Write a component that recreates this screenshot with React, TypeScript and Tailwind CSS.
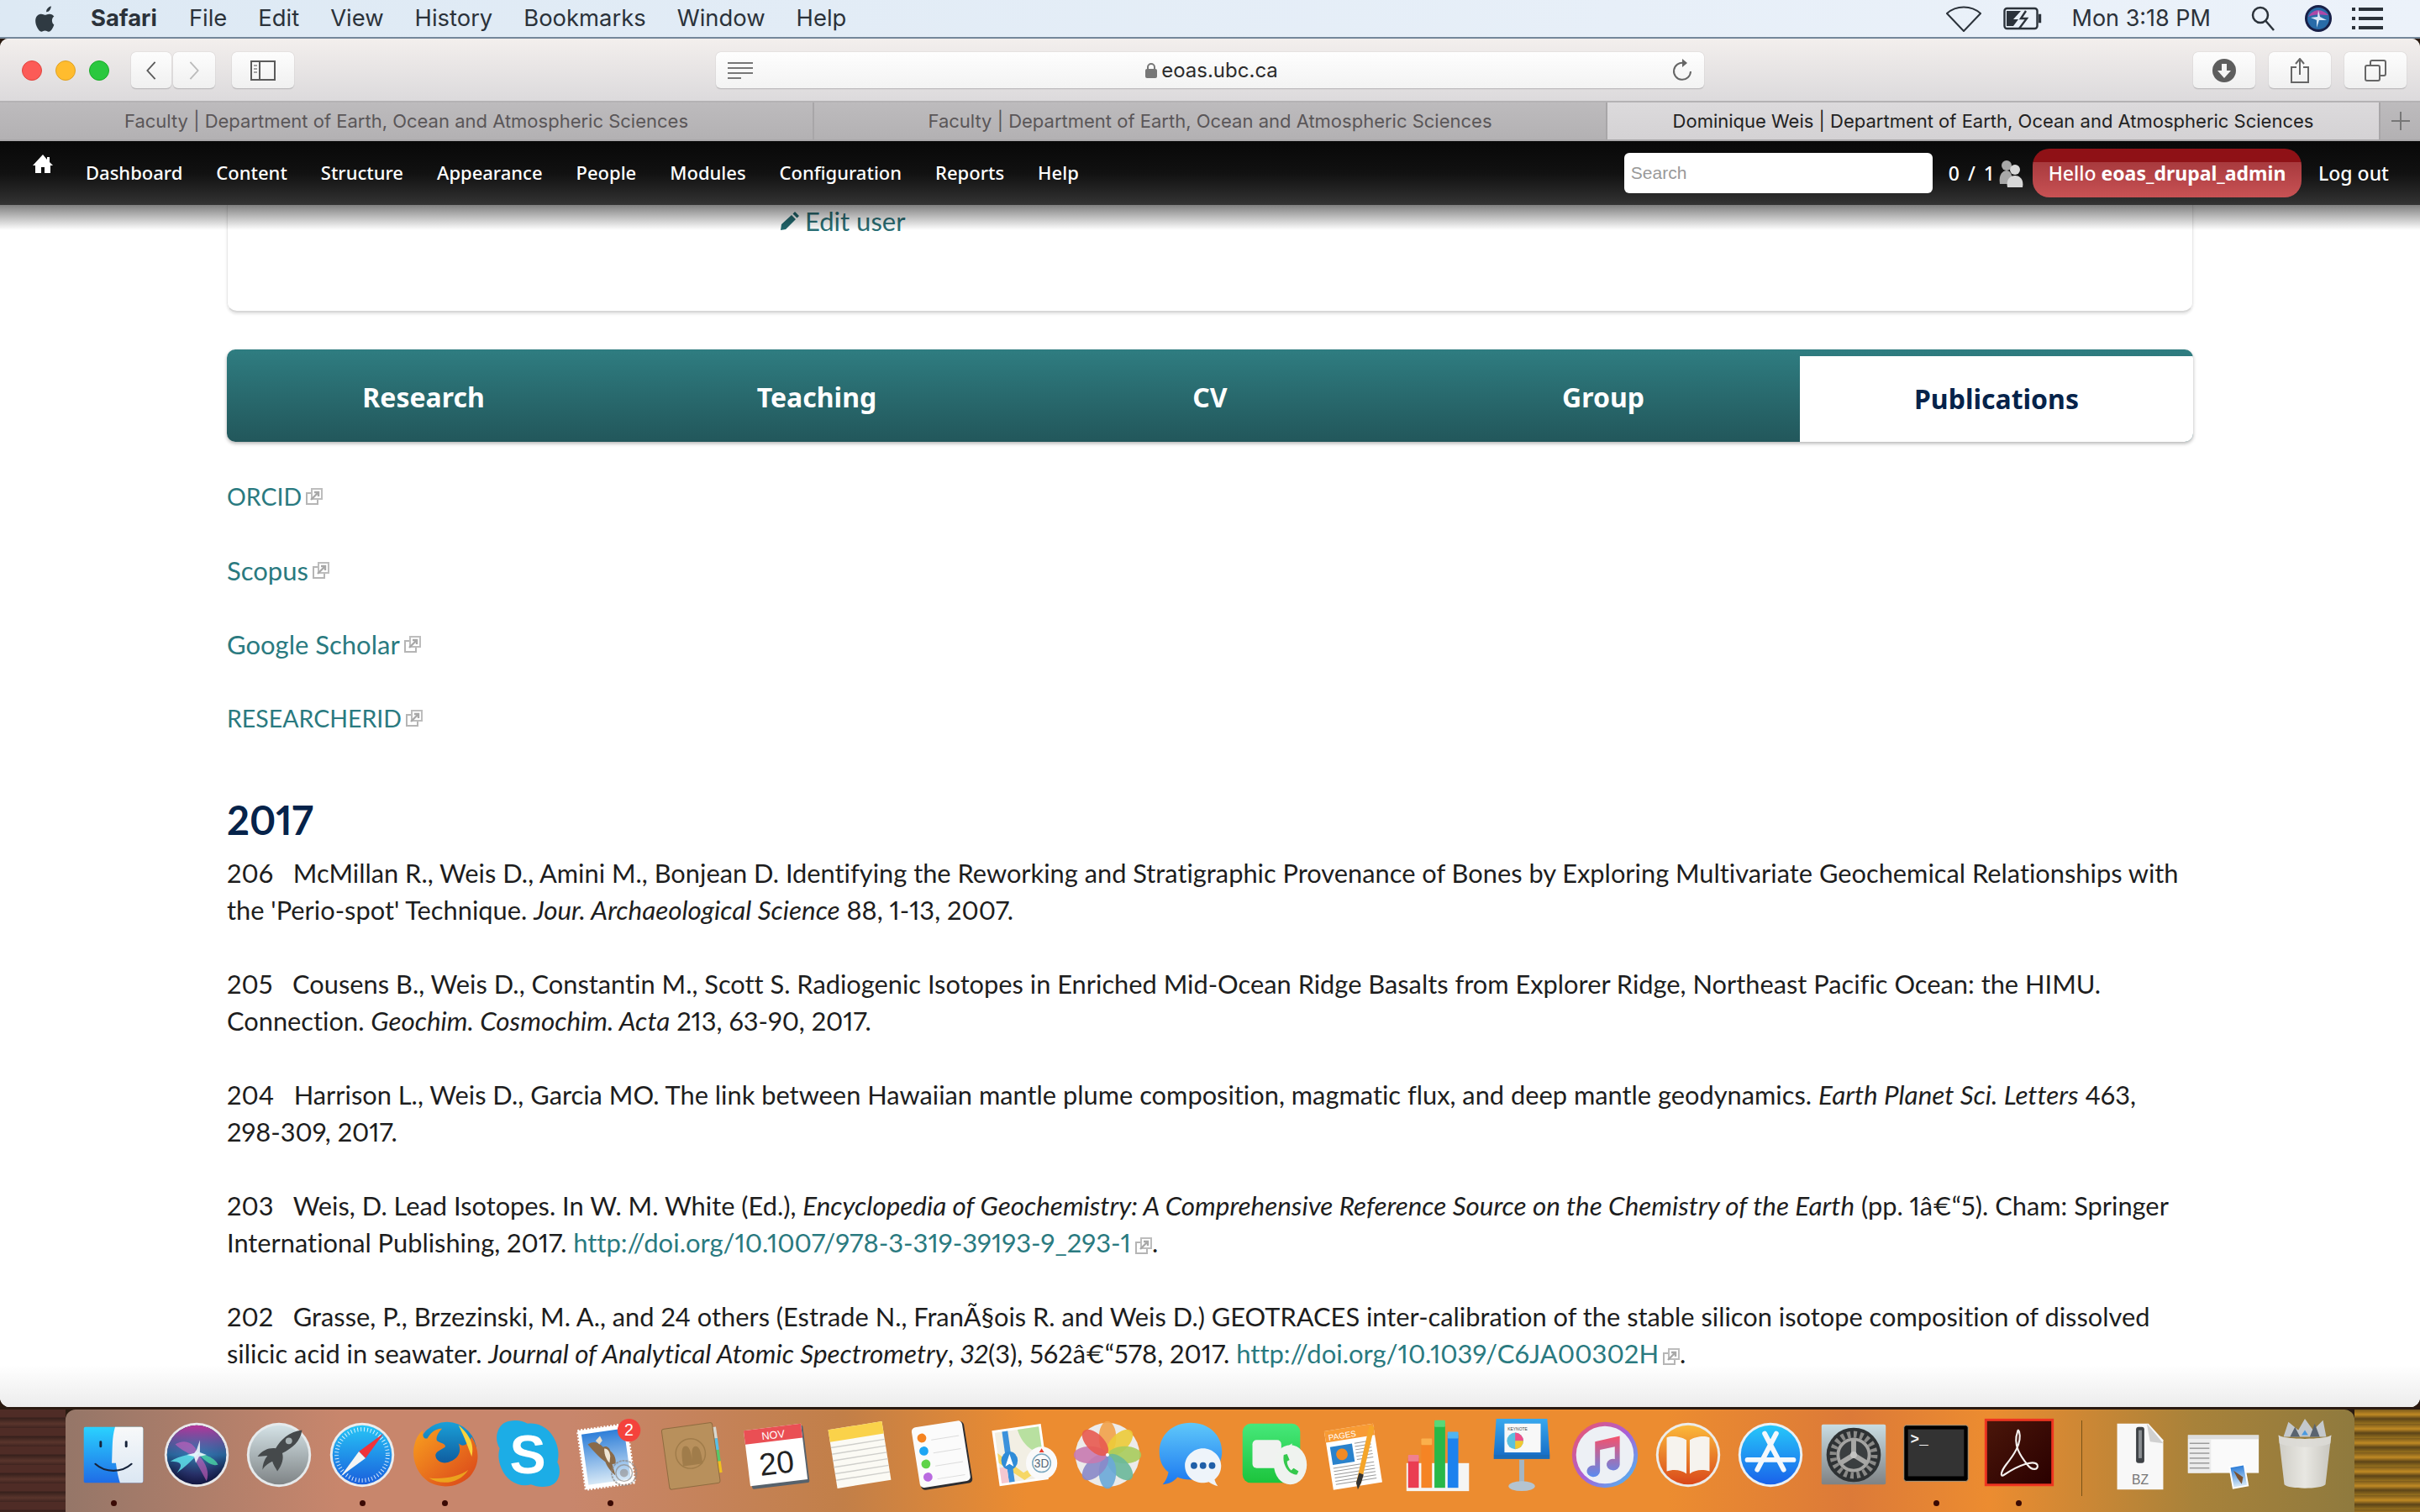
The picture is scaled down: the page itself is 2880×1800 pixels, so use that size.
import React from "react";

const ExtIcon = () => (
  <svg viewBox="0 0 20 20" className="inline-block w-[20px] h-[20px] ml-[5px] align-[-2px]" fill="none">
    <rect x="1" y="6" width="13" height="13" fill="#fff" stroke="#b5b5b5" strokeWidth="2" />
    <rect x="7" y="1" width="12" height="12" fill="#fff" stroke="#bdbdbd" strokeWidth="2" />
    <path d="M6 14 L14 6 M10 5 H15 V10" stroke="#a8a8a8" strokeWidth="2.4" />
  </svg>
);

const Ic = ({ children }: { children: React.ReactNode }) => (
  <svg viewBox="0 0 100 100" className="w-[98px] h-[98px] overflow-visible">{children}</svg>
);

const Defs = () => (
  <svg width="0" height="0" className="absolute">
    <defs>
      <linearGradient id="fL" x1="0" y1="0" x2="0" y2="1"><stop offset="0" stopColor="#2ad2ff" /><stop offset="1" stopColor="#1f6ce6" /></linearGradient>
      <linearGradient id="fR" x1="0" y1="0" x2="0" y2="1"><stop offset="0" stopColor="#f8f9fa" /><stop offset="1" stopColor="#dbe7f3" /></linearGradient>
      <radialGradient id="siri" cx="0.5" cy="0.5" r="0.55"><stop offset="0" stopColor="#3f6a9c" /><stop offset="0.6" stopColor="#2c2c68" /><stop offset="1" stopColor="#0b1236" /></radialGradient>
      <linearGradient id="siriT" x1="0" y1="0" x2="0" y2="1"><stop offset="0" stopColor="#b8349a" /><stop offset="0.5" stopColor="#2c82b8" stopOpacity="0.7" /><stop offset="1" stopColor="#0b1236" stopOpacity="0" /></linearGradient>
      <linearGradient id="lp" x1="0" y1="0" x2="0" y2="1"><stop offset="0" stopColor="#d4e2e6" /><stop offset="1" stopColor="#7f8486" /></linearGradient>
      <linearGradient id="saf" x1="0" y1="0" x2="0" y2="1"><stop offset="0" stopColor="#27c5f6" /><stop offset="1" stopColor="#1a5fdc" /></linearGradient>
      <linearGradient id="ffG" x1="0" y1="0" x2="0" y2="1"><stop offset="0" stopColor="#1aa0d8" /><stop offset="1" stopColor="#0b3f86" /></linearGradient>
      <linearGradient id="ffO" x1="0" y1="0" x2="1" y2="1"><stop offset="0" stopColor="#f9a01f" /><stop offset="1" stopColor="#d9421a" /></linearGradient>
      <linearGradient id="sky" x1="0" y1="0" x2="0" y2="1"><stop offset="0" stopColor="#2e7ed8" /><stop offset="1" stopColor="#d6e8f6" /></linearGradient>
      <linearGradient id="itu" x1="0" y1="0" x2="1" y2="1"><stop offset="0" stopColor="#f7545a" /><stop offset="0.5" stopColor="#a860d8" /><stop offset="1" stopColor="#3ec6f6" /></linearGradient>
      <linearGradient id="itn" x1="0" y1="0" x2="0" y2="1"><stop offset="0" stopColor="#f7506a" /><stop offset="1" stopColor="#5a8cf0" /></linearGradient>
      <linearGradient id="ibk" x1="0" y1="0" x2="0" y2="1"><stop offset="0" stopColor="#fbb93a" /><stop offset="1" stopColor="#d9481a" /></linearGradient>
      <linearGradient id="app" x1="0" y1="0" x2="0" y2="1"><stop offset="0" stopColor="#26c8fa" /><stop offset="1" stopColor="#1a62ea" /></linearGradient>
      <linearGradient id="msg" x1="0" y1="0" x2="0" y2="1"><stop offset="0" stopColor="#5fc8fa" /><stop offset="1" stopColor="#1c78f0" /></linearGradient>
      <linearGradient id="ft" x1="0" y1="0" x2="0" y2="1"><stop offset="0" stopColor="#46e87a" /><stop offset="1" stopColor="#1cc43c" /></linearGradient>
      <linearGradient id="sys" x1="0" y1="0" x2="0" y2="1"><stop offset="0" stopColor="#c9dde3" /><stop offset="1" stopColor="#7f8284" /></linearGradient>
      <linearGradient id="acro" x1="0" y1="0" x2="1" y2="1"><stop offset="0" stopColor="#4a160a" /><stop offset="1" stopColor="#2a0000" /></linearGradient>
      <linearGradient id="key" x1="0" y1="0" x2="0" y2="1"><stop offset="0" stopColor="#38a8ee" /><stop offset="1" stopColor="#1870c8" /></linearGradient>
      <linearGradient id="trash" x1="0" y1="0" x2="1" y2="0"><stop offset="0" stopColor="#cfcdc6" /><stop offset="0.5" stopColor="#e8e7e2" /><stop offset="1" stopColor="#c8c6bf" /></linearGradient>
    </defs>
  </svg>
);

const icons: React.ReactNode[] = [
  <Ic key="finder">
    <rect x="14" y="16" width="72" height="68" rx="2" fill="url(#fL)" />
    <path d="M52 16 H84 a2 2 0 0 1 2 2 V82 a2 2 0 0 1 -2 2 H58 C55 74 54 68 53 60 H48 C49 40 48 30 52 16 Z" fill="url(#fR)" />
    <rect x="33" y="33" width="3" height="8" rx="1.5" fill="#16233a" />
    <rect x="64" y="33" width="3" height="8" rx="1.5" fill="#16233a" />
    <path d="M28 61 C40 72 60 72 72 61" stroke="#16233a" strokeWidth="2.2" fill="none" strokeLinecap="round" />
  </Ic>,
  <Ic key="siri">
    <circle cx="50" cy="50" r="39" fill="#e8e8ea" />
    <circle cx="50" cy="50" r="36" fill="url(#siri)" />
    <circle cx="50" cy="50" r="36" fill="url(#siriT)" />
    <path d="M24 37 C40 28 50 40 52 50 C62 60 66 72 62 82 C56 70 50 60 46 52 C38 46 30 44 24 37 Z" fill="#d060c0" opacity="0.6" />
    <path d="M18 58 C30 50 44 50 54 46 C46 56 34 66 26 72 C34 62 32 58 18 58 Z" fill="#62e8f0" opacity="0.8" />
    <path d="M52 48 C64 50 74 56 76 62 C68 64 60 58 52 48 Z" fill="#4ee0a8" opacity="0.75" />
    <path d="M50 44 L54 32 L54 47 L62 50 L53 52 L49 60 L47 52 L38 50 L47 48 Z" fill="#f6fbff" opacity="0.85" />
  </Ic>,
  <Ic key="launch">
    <circle cx="50" cy="50" r="39" fill="#e6eaec" />
    <circle cx="50" cy="50" r="36" fill="url(#lp)" />
    <path d="M78 20 C62 22 52 32 46 42 C38 41 30 44 24 52 L36 51 C32 56 30 62 30 68 C34 62 38 60 42 58 C43 62 46 66 48 70 C54 62 56 54 54 48 C66 42 76 34 78 20 Z" fill="#45494b" />
    <circle cx="62" cy="33" r="4" fill="#a8b2b4" />
  </Ic>,
  <Ic key="safari">
    <circle cx="50" cy="50" r="39" fill="#ececec" />
    <circle cx="50" cy="50" r="36" fill="url(#saf)" />
    <circle cx="50" cy="50" r="31" fill="none" stroke="#fff" strokeWidth="5" strokeDasharray="1 3" opacity="0.85" />
    <polygon points="76,24 54,54 46,46" fill="#f0333a" />
    <polygon points="24,76 46,46 54,54" fill="#f4f4f4" />
  </Ic>,
  <Ic key="firefox">
    <circle cx="52" cy="46" r="36" fill="url(#ffG)" />
    <path d="M82 28 C92 44 92 62 80 76 C68 88 48 92 32 84 C14 74 8 52 13 36 C15 28 20 22 23 20 C22 28 24 31 28 30 C34 20 40 18 46 18 C40 24 38 30 40 33 C44 36 50 36 50 40 C46 44 40 44 38 50 C38 58 48 62 56 58 C66 54 70 46 66 36 C72 42 78 36 82 28 Z" fill="url(#ffO)" />
    <path d="M66 14 C78 24 86 36 82 52 C78 42 74 30 66 14 Z" fill="#fbd33a" />
    <path d="M30 78 C46 88 68 84 78 68 C68 76 48 80 30 78 Z" fill="#f0c020" opacity="0.7" />
  </Ic>,
  <Ic key="skype">
    <path d="M28 9 C37 7 44 9 50 12 C65 10 78 19 84 34 C88 44 88 52 86 59 C92 70 88 86 75 88 C66 90 60 88 54 86 C39 90 24 81 18 66 C14 56 14 48 16 42 C8 29 14 11 28 9 Z" fill="#1cade6" />
    <text x="50" y="72" textAnchor="middle" fontSize="66" fontWeight="700" fill="#fff" fontFamily="'Liberation Sans',sans-serif">S</text>
  </Ic>,
  <Ic key="mail">
    <g transform="rotate(-8 46 50)">
      <rect x="14" y="16" width="60" height="72" fill="#fff" stroke="#fff" strokeWidth="3" strokeDasharray="2 2" />
      <rect x="18" y="21" width="52" height="62" fill="url(#sky)" />
      <path d="M24 34 C32 30 38 34 42 40 C46 38 50 42 50 46 C54 50 56 56 54 62 L50 62 L52 76 C48 72 44 66 42 58 C36 52 30 44 24 34 Z" fill="#8a6a48" />
      <path d="M43 42 C47 42 49 46 49 52 L47 60 C44 56 42 50 43 42 Z" fill="#efe6d6" />
      <path d="M34 31 L40 26 L42 32 L38 36 Z" fill="#e8dcc8" />
    </g>
    <circle cx="66" cy="72" r="15" fill="none" stroke="#8f8a88" strokeWidth="2" opacity="0.7" strokeDasharray="3 1" />
    <circle cx="66" cy="72" r="10" fill="none" stroke="#8f8a88" strokeWidth="1.5" opacity="0.7" />
    <circle cx="66" cy="72" r="5" fill="#8f8a88" opacity="0.6" />
    <circle cx="72" cy="20" r="14" fill="#f4423c" />
    <text x="72" y="27" textAnchor="middle" fontSize="20" fill="#fff" fontFamily="'Liberation Sans',sans-serif">2</text>
  </Ic>,
  <Ic key="contacts">
    <g transform="rotate(-8 50 50)">
      <rect x="76" y="20" width="6" height="14" fill="#d8d8d0" />
      <rect x="76" y="34" width="6" height="14" fill="#58c0e8" />
      <rect x="76" y="48" width="6" height="14" fill="#58c868" />
      <rect x="76" y="62" width="6" height="14" fill="#f0c020" />
      <rect x="16" y="14" width="62" height="74" rx="3" fill="#b8905c" stroke="#8f6c40" strokeWidth="1" />
      <circle cx="47" cy="48" r="18" fill="none" stroke="#a07c4a" strokeWidth="1.5" />
      <path d="M36 62 C36 50 36 38 42 38 C48 38 48 50 48 62 Z M48 62 C48 52 48 40 54 40 C60 40 60 52 60 62 Z" fill="#a07c4a" />
    </g>
  </Ic>,
  <Ic key="cal">
    <g transform="rotate(-7 50 50)">
      <rect x="16" y="18" width="70" height="70" rx="2" fill="#57626c" />
      <rect x="14" y="16" width="70" height="68" fill="#fff" />
      <rect x="14" y="16" width="70" height="17" fill="#ea4f54" />
      <text x="49" y="30" textAnchor="middle" fontSize="13" fill="#fff" fontFamily="'Liberation Sans',sans-serif">NOV</text>
      <text x="49" y="73" textAnchor="middle" fontSize="38" fill="#222" fontFamily="'Liberation Sans',sans-serif">20</text>
    </g>
  </Ic>,
  <Ic key="notes">
    <g transform="rotate(-9 50 50)">
      <rect x="17" y="14" width="66" height="72" fill="#fbfaf4" />
      <rect x="17" y="14" width="66" height="15" fill="#fad24a" />
      {[36, 44, 52, 60, 68, 76].map((y) => <line key={y} x1="17" x2="83" y1={y} y2={y} stroke="#cfcfcb" strokeWidth="1.5" />)}
    </g>
  </Ic>,
  <Ic key="rem">
    <g transform="rotate(-9 50 50)">
      <rect x="19" y="13" width="63" height="76" rx="5" fill="#2d2d30" />
      <rect x="18" y="12" width="62" height="74" rx="5" fill="#fbfbfb" />
      {[["#f58320", 26], ["#1ea6f4", 42], ["#5fd34a", 58], ["#b96ae0", 74]].map(([c, y]) => (
        <g key={String(c)}>
          <circle cx="29" cy={Number(y)} r="5.5" fill={String(c)} />
          <line x1="40" x2="74" y1={Number(y) + 4} y2={Number(y) + 4} stroke="#dcdcdc" strokeWidth="1" />
        </g>
      ))}
    </g>
  </Ic>,
  <Ic key="maps">
    <g transform="rotate(-8 45 50)">
      <rect x="14" y="16" width="60" height="68" fill="#fff" />
      <rect x="17" y="19" width="54" height="62" fill="#f2efe4" />
      <path d="M45 19 H71 V50 C60 50 48 38 45 19 Z" fill="#b8e0a0" />
      <path d="M17 44 L45 72 L71 60 L71 68 L45 81 L17 56 Z" fill="#f6d765" />
      <rect x="26" y="19" width="7" height="62" fill="#3c92dc" />
      <rect x="17" y="62" width="9" height="19" fill="#f6c8d0" />
    </g>
    <ellipse cx="31" cy="57" rx="10" ry="11" fill="#2f8cd8" />
    <polygon points="31,49 36,64 31,61 26,64" fill="#fff" />
    <ellipse cx="70" cy="60" rx="19" ry="20" fill="#fafafa" />
    <circle cx="70" cy="60" r="11" fill="none" stroke="#7aa8c0" strokeWidth="1.5" />
    <polygon points="70,42 73,47 67,47" fill="#e84030" />
    <text x="70" y="65" textAnchor="middle" fontSize="14" fill="#567" fontFamily="'Liberation Sans',sans-serif">3D</text>
  </Ic>,
  <Ic key="photos">
    <circle cx="50" cy="50" r="39" fill="#ecebea" />
    {[["#f2a24a", 0], ["#eccb38", 45], ["#a8cc5c", 90], ["#6ab89a", 135], ["#6aa8d8", 180], ["#8a88c8", 225], ["#c87ab0", 270], ["#e85a50", 315]].map(([c, r]) => (
      <ellipse key={String(r)} cx="50" cy="29" rx="10.5" ry="20" fill={String(c)} opacity="0.9" transform={`rotate(${r} 50 50)`} />
    ))}
    <circle cx="50" cy="50" r="2" fill="#fff" />
  </Ic>,
  <Ic key="msgs">
    <path d="M50 11 C72 11 88 26 88 46 C88 66 72 80 50 80 C44 80 38 79 34 77 C30 82 24 85 16 86 C20 81 22 77 23 71 C15 65 12 56 12 46 C12 26 28 11 50 11 Z" fill="url(#msg)" />
    <path d="M65 42 C77 42 87 52 87 63 C87 70 84 76 79 80 C80 83 81 85 83 88 C78 87 75 85 72 83 C69 84 67 84 65 84 C53 84 43 75 43 63 C43 52 53 42 65 42 Z" fill="#eef4fa" />
    <circle cx="54" cy="63" r="4" fill="#1f5fa8" /><circle cx="65" cy="63" r="4" fill="#1f5fa8" /><circle cx="76" cy="63" r="4" fill="#1f5fa8" />
  </Ic>,
  <Ic key="ft">
    <rect x="12" y="12" width="70" height="72" rx="10" fill="url(#ft)" />
    <rect x="24" y="32" width="35" height="34" rx="5" fill="#f0f2f0" />
    <polygon points="59,46 72,36 72,62 59,52" fill="#eef2ee" />
    <ellipse cx="70" cy="62" rx="20" ry="24" fill="#eff3ef" />
    <path d="M62 50 C60 62 68 74 78 74 L80 70 L74 66 L71 69 C68 66 66 62 66 58 L69 56 L66 49 Z" fill="#34c84c" />
  </Ic>,
  <Ic key="pages">
    <g transform="rotate(-9 48 50)">
      <rect x="16" y="16" width="60" height="72" fill="#fff" />
      <rect x="16" y="16" width="60" height="14" fill="#f89b34" />
      <text x="20" y="28" fontSize="10" fill="#fff" fontFamily="'Liberation Sans',sans-serif">PAGES</text>
      <rect x="20" y="36" width="27" height="22" fill="#2a82cc" />
      <circle cx="33" cy="47" r="7" fill="#f08a24" />
      {[62, 66, 70, 74, 78, 82].map((y) => <line key={y} x1="20" x2="70" y1={y} y2={y} stroke="#999" strokeWidth="1" />)}
      {[36, 40, 44, 48, 52, 56].map((y) => <line key={y} x1="50" x2="70" y1={y} y2={y} stroke="#999" strokeWidth="1" />)}
    </g>
    <path d="M66 14 L72 16 L56 84 L52 92 L50 84 Z" fill="#f5a52a" />
    <path d="M53.5 72 L59 74 L56 84 L52 92 L50 84 Z" fill="#333" />
  </Ic>,
  <Ic key="num">
    <rect x="10" y="60" width="76" height="34" fill="#f5f5f3" />
    <rect x="12" y="54" width="13" height="36" fill="#ea3d52" />
    <rect x="12" y="50" width="13" height="8" rx="1" fill="#f08090" />
    <rect x="28" y="34" width="13" height="56" fill="#f58424" />
    <rect x="28" y="30" width="13" height="8" rx="1" fill="#fbb04c" />
    <rect x="44" y="12" width="13" height="78" fill="#28b848" />
    <rect x="44" y="8" width="13" height="8" rx="1" fill="#58d878" />
    <rect x="60" y="26" width="13" height="64" fill="#1c82ee" />
    <rect x="60" y="22" width="13" height="8" rx="1" fill="#50b4f0" />
  </Ic>,
  <Ic key="key">
    <rect x="47" y="56" width="6" height="32" fill="#a4b6c4" />
    <ellipse cx="50" cy="88" rx="16" ry="6" fill="#b4c4d0" />
    <polygon points="19,6 81,6 84,50 16,50" fill="url(#key)" />
    <rect x="16" y="50" width="68" height="5" fill="#1a6cb8" />
    <rect x="29" y="12" width="44" height="35" fill="#f8f8f8" />
    <text x="33" y="20" fontSize="5" fill="#444" fontFamily="'Liberation Sans',sans-serif">KEYNOTE</text>
    <circle cx="42" cy="33" r="10" fill="#5ac0e0" />
    <path d="M42 33 V23 A10 10 0 0 1 52 33 Z" fill="#f05088" />
    <path d="M42 33 H52 A10 10 0 0 1 42 43 Z" fill="#f2c830" />
  </Ic>,
  <Ic key="itunes">
    <circle cx="50" cy="50" r="40" fill="url(#itu)" />
    <circle cx="50" cy="50" r="35" fill="#edf0f5" />
    <path d="M38 34 L68 27 V62 A8 7 0 1 1 62 55 V40 L44 44 V70 A8 7 0 1 1 38 63 Z" fill="url(#itn)" />
  </Ic>,
  <Ic key="ibooks">
    <circle cx="50" cy="50" r="39" fill="#ececea" />
    <circle cx="50" cy="50" r="36" fill="url(#ibk)" />
    <path d="M48 32 C42 28 30 26 24 29 V70 C32 67 42 68 48 73 Z M52 32 C58 28 70 26 76 29 V70 C68 67 58 68 52 73 Z" fill="#f6f3ee" />
  </Ic>,
  <Ic key="appstore">
    <circle cx="50" cy="50" r="39" fill="#eaf0f4" />
    <circle cx="50" cy="50" r="36" fill="url(#app)" />
    <path d="M57 24 L34 68 M43 24 L66 68" stroke="#f4f8fc" strokeWidth="6" strokeLinecap="round" />
    <path d="M22 56 H78" stroke="#f4f8fc" strokeWidth="6" strokeLinecap="round" />
  </Ic>,
  <Ic key="sys">
    <rect x="11" y="13" width="78" height="73" rx="2" fill="url(#sys)" />
    <circle cx="50" cy="50" r="33" fill="#2e3234" />
    <circle cx="50" cy="50" r="25" fill="none" stroke="#8a8a88" strokeWidth="8" strokeDasharray="4 3.8" />
    <circle cx="50" cy="50" r="19" fill="#3a3e40" stroke="#a4a4a2" strokeWidth="4" />
    <path d="M50 50 V32 M50 50 L66 60 M50 50 L34 60" stroke="#a8a8a6" strokeWidth="6" />
    <circle cx="50" cy="50" r="4" fill="#c4c4c2" />
  </Ic>,
  <Ic key="term">
    <rect x="11" y="14" width="78" height="68" rx="3" fill="#000" stroke="#a89a80" strokeWidth="1" />
    <rect x="16" y="19" width="68" height="57" fill="#333" />
    <text x="19" y="37" fontSize="18" fontWeight="700" fill="#f2f2f2" fontFamily="'Liberation Mono',monospace">&gt;_</text>
  </Ic>,
  <Ic key="acrobat">
    <rect x="8" y="6" width="84" height="82" fill="#ee3420" />
    <rect x="11" y="9" width="78" height="76" fill="url(#acro)" />
    <path d="M48 22 C42 38 52 52 60 62 C66 70 74 68 72 62 C68 56 50 62 32 74 C26 78 28 70 34 62 C42 52 54 36 50 22 C49 19 48 20 48 22 Z" fill="none" stroke="#f4f0ee" strokeWidth="2.2" />
  </Ic>,
];

const stacks: React.ReactNode[] = [
  <Ic key="zip">
    <path d="M22 12 H60 L78 32 V92 H22 Z" fill="#f8f8f8" />
    <path d="M58 12 L78 36 L62 34 Z" fill="#d0d0d0" />
    <rect x="45" y="16" width="10" height="44" rx="3" fill="#3e4246" />
    <rect x="48" y="20" width="4" height="34" fill="#8a8e92" />
    <text x="50" y="86" textAnchor="middle" fontSize="16" fill="#777" fontFamily="'Liberation Sans',sans-serif">BZ</text>
  </Ic>,
  <Ic key="mw">
    <rect x="8" y="26" width="86" height="46" fill="#fafafa" />
    <rect x="8" y="26" width="86" height="5" fill="#ddd" />
    <rect x="8" y="31" width="28" height="41" fill="#ececec" />
    {[36, 42, 48, 54, 60, 66].map((y) => <line key={y} x1="10" x2="34" y1={y} y2={y} stroke="#999" strokeWidth="1.5" />)}
    <g transform="rotate(-10 70 78)">
      <rect x="60" y="62" width="20" height="28" fill="#fff" />
      <rect x="62" y="64" width="16" height="24" fill="url(#sky)" />
      <path d="M65 68 L75 78 L72 86 L68 78 Z" fill="#7a5230" />
    </g>
  </Ic>,
  <Ic key="trash">
    <path d="M18 26 C24 32 76 32 82 26 L75 86 C70 92 30 92 25 86 Z" fill="url(#trash)" />
    <path d="M24 28 L30 10 L42 20 L50 6 L60 20 L72 8 L76 28 Z" fill="#c4c8cc" />
    <path d="M32 28 L38 16 L44 28 Z M56 28 L62 12 L68 28 Z" fill="#5a6470" />
    <path d="M46 26 L50 20 L54 26 Z" fill="#4a9ae0" />
    <path d="M18 26 C24 32 76 32 82 26 L81 36 C70 42 30 42 19 36 Z" fill="#dcdbd6" opacity="0.85" />
  </Ic>,
];

const running = new Set([0, 3, 4, 6, 22, 23]);

const menus = ["File", "Edit", "View", "History", "Bookmarks", "Window", "Help"];
const admin = ["Dashboard", "Content", "Structure", "Appearance", "People", "Modules", "Configuration", "Reports", "Help"];
const tabs = ["Research", "Teaching", "CV", "Group"];

const Btn = ({ w, children }: { w: string; children: React.ReactNode }) => (
  <div className={`${w} h-[44px] rounded-[6px] bg-gradient-to-b from-[#fdfdfd] to-[#f0f0f0] border-b border-b-[#bdbbbd] shadow-[0_0_1px_rgba(0,0,0,0.35)] flex items-center justify-center`}>
    {children}
  </div>
);

const A = ({ children }: { children: React.ReactNode }) => <span className="text-[#2a7a80] text-[31px] leading-none">{children}</span>;
const I = ({ children }: { children: React.ReactNode }) => <i className="text-[31.4px] leading-none">{children}</i>;

export default function App() {
  return (
    <div className="w-[2880px] h-[1800px] overflow-hidden flex flex-col bg-[#2a1a10] font-['Lato','Noto_Sans',sans-serif]">
      <Defs />
      {/* menu bar */}
      <div className="h-[46px] shrink-0 flex items-center bg-gradient-to-r from-[#dde9f4] to-[#ecf2fa] border-b-2 border-b-[#74879a] font-['Inter',sans-serif] text-[27.4px] text-[#2b323a]">
        <svg viewBox="0 0 24 28" className="w-[28px] h-[33px] ml-[41px] mr-[39px]" fill="#2f3a42">
          <path d="M17 1 C17 4 15 7 12 7 C12 4 14 2 17 1 Z M20 20 C19 23 17 27 14.5 27 C13 27 12.5 26 10.8 26 C9 26 8.5 27 7 27 C4.5 27 1 21 1 16 C1 11 4 9 7 9 C8.6 9 10 10 11 10 C12 10 13.6 8.8 15.6 9 C17.5 9 19 10 20 11.5 C17 13.5 17.5 18.5 20 20 Z" />
        </svg>
        <span className="font-bold mr-[38px]">Safari</span>
        <div className="flex gap-[37px]">{menus.map((m) => <span key={m}>{m}</span>)}</div>
        <div className="ml-auto flex items-center pr-[44px]">
          <svg viewBox="0 0 42 32" className="w-[42px] h-[32px] mr-[26px]" fill="none" stroke="#2b323a" strokeWidth="2"><path d="M1 10 C12 0 30 0 41 10 L21 31 Z" /></svg>
          <svg viewBox="0 0 46 28" className="w-[46px] h-[28px] mr-[36px]" fill="none" stroke="#2b323a" strokeWidth="2.4">
            <rect x="1.5" y="2" width="39" height="24" rx="3" />
            <path d="M42 10 h2 v8 h-2" fill="#2b323a" />
            <path d="M4 5 H21 L12 15 H18 L12 23 H4 Z" fill="#2b323a" stroke="none" />
            <path d="M27 5 L21 14 H28 L19 26" strokeWidth="2.4" />
          </svg>
          <span className="mr-[48px] text-[27px]">Mon 3:18 PM</span>
          <svg viewBox="0 0 28 30" className="w-[28px] h-[30px] mr-[36px]" fill="none" stroke="#2b323a" strokeWidth="2.5"><circle cx="11" cy="11" r="9" /><path d="M17.5 18 L27 29" /></svg>
          <svg viewBox="0 0 32 32" className="w-[32px] h-[32px] mr-[24px]">
            <circle cx="16" cy="16" r="16" fill="#182048" />
            <circle cx="16" cy="16" r="13" fill="#2e7ec0" opacity="0.8" />
            <path d="M4 14 C10 4 20 4 28 12 C22 12 12 10 4 14 Z" fill="#d040a8" opacity="0.8" />
            <path d="M16 6 L18 14 L26 18 L17 18 L14 27 L14 18 L7 15 L15 14 Z" fill="#e8f4ff" opacity="0.9" />
          </svg>
          <svg viewBox="0 0 37 30" className="w-[37px] h-[30px]" fill="#2b323a">
            <rect x="0" y="2" width="4" height="4" /><rect x="8" y="2" width="29" height="4" />
            <rect x="0" y="13" width="4" height="4" /><rect x="8" y="13" width="29" height="4" />
            <rect x="0" y="24" width="4" height="4" /><rect x="8" y="24" width="29" height="4" />
          </svg>
        </div>
      </div>

      {/* window */}
      <div className="h-[1629px] shrink-0 flex flex-col rounded-t-[10px] rounded-b-[12px] overflow-hidden bg-white">
        <div className="h-[76px] shrink-0 flex items-center bg-gradient-to-b from-[#f3efed] to-[#dcdadc] border-b-2 border-b-[#b4b2b4] pt-[2px]">
          <div className="flex gap-[16px] ml-[26px] mr-[26px]">
            <div className="w-[24px] h-[24px] rounded-full bg-[#fc5b57] border border-[#e0443e]" />
            <div className="w-[24px] h-[24px] rounded-full bg-[#ffbc2e] border border-[#dea123]" />
            <div className="w-[24px] h-[24px] rounded-full bg-[#2ac83f] border border-[#1aab29]" />
          </div>
          <div className="flex gap-[2px] mr-[20px]">
            <Btn w="w-[48px]"><svg viewBox="0 0 14 26" className="w-[14px] h-[24px]" fill="none" stroke="#5a5a5a" strokeWidth="2"><path d="M12 2 L2 13 L12 24" /></svg></Btn>
            <Btn w="w-[50px]"><svg viewBox="0 0 14 26" className="w-[14px] h-[24px]" fill="none" stroke="#bbb" strokeWidth="2"><path d="M2 2 L12 13 L2 24" /></svg></Btn>
          </div>
          <Btn w="w-[74px]">
            <svg viewBox="0 0 30 24" className="w-[30px] h-[24px]" fill="none" stroke="#5a5a5a" strokeWidth="2"><rect x="1" y="1" width="28" height="22" /><path d="M11 1 V23" /><path d="M4 6 H8 M4 10 H8 M4 14 H8" strokeWidth="1.5" stroke="#888" /></svg>
          </Btn>
          <div className="ml-[502px] w-[1176px] h-[44px] rounded-[6px] bg-gradient-to-b from-[#fefefe] to-[#f3f3f3] border-b border-b-[#bdbbbd] shadow-[0_0_1px_rgba(0,0,0,0.35)] flex items-center px-[14px]">
            <svg viewBox="0 0 30 22" className="w-[30px] h-[22px]" stroke="#777" strokeWidth="2"><path d="M0 2 H30 M0 8 H30 M0 14 H30 M0 20 H16" /></svg>
            <div className="flex-1 flex items-center justify-center font-['Inter',sans-serif] text-[24px] text-[#2c2c2c] gap-[5px] pr-[2px]">
              <svg viewBox="0 0 14 18" className="w-[14px] h-[18px]" fill="#777"><rect x="0" y="7" width="14" height="11" rx="2" /><path d="M3 8 V5 a4 4 0 0 1 8 0 V8" fill="none" stroke="#777" strokeWidth="2" /></svg>
              <span>eoas.ubc.ca</span>
            </div>
            <svg viewBox="0 0 24 28" className="w-[24px] h-[28px]" fill="none" stroke="#666" strokeWidth="2"><path d="M14 5 A10 10 0 1 0 22 15" /><path d="M12 0 L18 5 L12 10 Z" fill="#666" stroke="none" /></svg>
          </div>
          <div className="ml-auto flex gap-[16px] mr-[16px]">
            <Btn w="w-[74px]"><svg viewBox="0 0 28 28" className="w-[28px] h-[28px]"><circle cx="14" cy="14" r="14" fill="#5d5d5d" /><path d="M11 6 H17 V14 H22 L14 23 L6 14 H11 Z" fill="#f5f5f5" /></svg></Btn>
            <Btn w="w-[74px]"><svg viewBox="0 0 22 30" className="w-[22px] h-[30px]" fill="none" stroke="#666" strokeWidth="2"><path d="M7 11 H1 V29 H21 V11 H15" /><path d="M11 20 V2 M6 7 L11 1 L16 7" /></svg></Btn>
            <Btn w="w-[74px]"><svg viewBox="0 0 26 26" className="w-[26px] h-[26px]" fill="none" stroke="#666" strokeWidth="2"><rect x="1" y="7" width="17" height="18" rx="2" /><path d="M7 7 V3 a2 2 0 0 1 2 -2 H23 a2 2 0 0 1 2 2 V17 a2 2 0 0 1 -2 2 H18" /></svg></Btn>
          </div>
        </div>

        {/* browser tabs */}
        <div className="h-[46px] shrink-0 flex items-center font-['Inter',sans-serif] text-[22px] bg-gradient-to-b from-[#bdbbbd] to-[#b3b1b3] border-b-2 border-b-[#a8a6a8] text-[#5a5658]">
          <div className="w-[967px] text-center">Faculty | Department of Earth, Ocean and Atmospheric Sciences</div>
          <div className="w-[944px] h-full flex items-center justify-center border-l-2 border-l-[#a8a6a8]">Faculty | Department of Earth, Ocean and Atmospheric Sciences</div>
          <div className="w-[922px] h-full flex items-center justify-center border-x-2 border-x-[#a8a6a8] bg-gradient-to-b from-[#dcdadc] to-[#d4d2d4] text-[#222]">Dominique Weis | Department of Earth, Ocean and Atmospheric Sciences</div>
          <div className="flex-1 flex items-center justify-center">
            <svg viewBox="0 0 22 22" className="w-[22px] h-[22px]" stroke="#777" strokeWidth="2"><path d="M11 0 V22 M0 11 H22" /></svg>
          </div>
        </div>

        {/* admin bar */}
        <div className="h-[76px] shrink-0 flex items-center bg-gradient-to-b from-[#080808] via-[#111111] to-[#343434] text-white font-['Noto_Sans',sans-serif] text-[23px] font-medium z-10">
          <svg viewBox="0 0 24 24" className="w-[24px] h-[24px] ml-[39px] mr-[39px] mb-[22px]" fill="#fff"><path d="M12 1 L17 7 V4 H20 V10 L24 14 H21 V23 H14 V16 H10 V23 H3 V14 H0 Z" /></svg>
          <div className="flex gap-[40px] text-[22px] pb-[2px]">{admin.map((a) => <span key={a}>{a}</span>)}</div>
          <div className="ml-auto flex items-center pr-[40px]">
            <div className="w-[367px] h-[48px] rounded-[6px] bg-white flex items-center pl-[8px] text-[#999] text-[21px] font-normal font-['Liberation_Sans',sans-serif]">Search</div>
            <span className="ml-[19px] [word-spacing:4px]">0 / 1</span>
            <svg viewBox="0 0 30 34" className="w-[30px] h-[34px] ml-[4px]" fill="#a8a8a8"><circle cx="10" cy="8" r="6" /><path d="M2 30 C0 18 6 14 10 14 C14 14 18 18 16 30 Z" /><circle cx="20" cy="13" r="6" fill="#d8d8d8" /><path d="M11 34 C9 24 15 20 20 20 C25 20 31 24 29 34 Z" fill="#d8d8d8" /></svg>
            <div className="w-[320px] h-[58px] ml-[11px] rounded-[20px] flex items-center justify-center bg-[linear-gradient(to_bottom,#8f1116_0,#8f1116_16px,#a83a3e_16px,#c85254_100%)]">
              <span>Hello <b>eoas_drupal_admin</b></span>
            </div>
            <span className="w-[81px] ml-[20px] whitespace-nowrap">Log out</span>
          </div>
        </div>

        {/* page */}
        <div className="relative flex-1 overflow-hidden bg-white px-[270px] text-[30.8px] leading-[44px] text-[#1d1d1d] proportional-nums [font-variant-ligatures:none]">
          <div className="absolute inset-x-0 top-0 h-[30px] bg-gradient-to-b from-black/50 to-transparent" />
          <div className="absolute inset-x-0 bottom-0 h-[50px] bg-gradient-to-b from-transparent to-[#ececec]" />
          <div className="h-[128px] rounded-b-[12px] border-x border-x-[#e8e8e8] border-b-2 border-b-[#d8d8d8] shadow-[0_2px_3px_rgba(0,0,0,0.1)] pl-[657px] leading-[38px] text-[31px]">
            <div className="flex items-center text-[#2a6f75]">
              <svg viewBox="0 0 24 24" className="w-[24px] h-[24px] mr-[6px]" fill="#22686e"><path d="M18 1 L23 6 L20.5 8.5 L15.5 3.5 Z M14 5 L19 10 L7 22 L1 23 L2 16 Z" /></svg>
              Edit user
            </div>
          </div>

          <div className="mt-[44px] h-[110px] flex rounded-[10px] overflow-hidden bg-gradient-to-b from-[#2f7d81] to-[#22575b] shadow-[0_2px_4px_rgba(0,0,0,0.3)] font-['Noto_Sans',sans-serif] font-bold text-[32px]">
            {tabs.map((t) => <div key={t} className="w-[468px] pt-[3px] flex items-center justify-center text-white">{t}</div>)}
            <div className="w-[468px] mt-[8px] flex items-center justify-center bg-white text-[#06234a]">Publications</div>
          </div>

          <div className="mt-[43px] flex flex-col gap-[44px]">
            <div className="h-[44px] flex items-center text-[#2a7a80] text-[28.5px]">ORCID<ExtIcon /></div>
            <div className="h-[44px] flex items-center text-[#2a7a80] text-[31px]">Scopus<ExtIcon /></div>
            <div className="h-[44px] flex items-center text-[#2a7a80] text-[31px]">Google Scholar<ExtIcon /></div>
            <div className="h-[44px] flex items-center text-[#2a7a80] text-[28.5px]">RESEARCHERID<ExtIcon /></div>
          </div>

          <h2 className="mt-[69px] mb-[12px] text-[47px] leading-[60px] font-bold text-[#06234a]">2017</h2>

          <div className="flex flex-col gap-[44px] whitespace-nowrap">
            <p className="h-[88px]">206&nbsp;&nbsp; McMillan R., Weis D., Amini M., Bonjean D. Identifying the Reworking and Stratigraphic Provenance of Bones by Exploring Multivariate Geochemical Relationships with<br />the 'Perio-spot' Technique. <I>Jour. Archaeological Science</I> 88, 1-13, 2007.</p>
            <p className="h-[88px]">205&nbsp;&nbsp; Cousens B., Weis D., Constantin M., Scott S. Radiogenic Isotopes in Enriched Mid-Ocean Ridge Basalts from Explorer Ridge, Northeast Pacific Ocean: the HIMU.<br />Connection. <I>Geochim. Cosmochim. Acta</I> 213, 63-90, 2017.</p>
            <p className="h-[88px]">204&nbsp;&nbsp; Harrison L., Weis D., Garcia MO. The link between Hawaiian mantle plume composition, magmatic flux, and deep mantle geodynamics. <I>Earth Planet Sci. Letters</I> 463,<br />298-309, 2017.</p>
            <p className="h-[88px]">203&nbsp;&nbsp; Weis, D. Lead Isotopes. In W. M. White (Ed.), <I>Encyclopedia of Geochemistry: A Comprehensive Reference Source on the Chemistry of the Earth</I> (pp. 1â€“5). Cham: Springer<br />International Publishing, 2017. <A>http://doi.org/10.1007/978-3-319-39193-9_293-1</A><ExtIcon />.</p>
            <p className="h-[88px]">202&nbsp;&nbsp; Grasse, P., Brzezinski, M. A., and 24 others (Estrade N., FranÃ§ois R. and Weis D.) GEOTRACES inter-calibration of the stable silicon isotope composition of dissolved<br />silicic acid in seawater. <I>Journal of Analytical Atomic Spectrometry</I>, <I>32</I>(3), 562â€“578, 2017. <A>http://doi.org/10.1039/C6JA00302H</A><ExtIcon />.</p>
          </div>
        </div>
      </div>

      {/* desktop + dock */}
      <div className="flex-1 flex">
        <div className="w-[78px] mt-[3px] bg-[repeating-linear-gradient(180deg,#4f2c26_0,#4f2c26_9px,#36201c_10px,#5a352c_17px,#3f2420_22px)]" />
        <div className="w-[2724px] mt-[3px] rounded-t-[12px] flex pl-[8px] bg-[linear-gradient(90deg,#957668_0%,#c8866c_12%,#c8866c_22%,#c27f48_34%,#ec8c30_42%,#ec8c30_70%,#dc7a38_78%,#ec8c30_84%,#a8823a_93%,#8f7a3e_100%)]">
          {icons.map((ic, i) => (
            <div key={i} className="w-[98.6px] shrink-0 pt-[5px] flex flex-col items-center">
              {ic}
              <div className={running.has(i) ? "w-[7px] h-[7px] mt-[5px] rounded-full bg-[#3a0a04]" : "w-[7px] h-[7px] mt-[5px]"} />
            </div>
          ))}
          <div className="w-px h-[90px] mt-[13px] ml-[25px] mr-[20px] bg-[#7a5418]" />
          {stacks.map((ic, i) => (
            <div key={i} className="w-[98px] shrink-0 pt-[5px] flex flex-col items-center">{ic}</div>
          ))}
        </div>
        <div className="flex-1 mt-[3px] bg-[repeating-linear-gradient(180deg,#7a5a1c_0,#c08a24_6px,#5c4418_11px,#96701e_17px)]" />
      </div>
    </div>
  );
}
